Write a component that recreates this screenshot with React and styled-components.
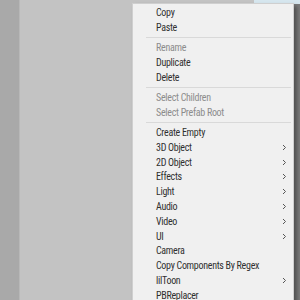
import React from 'react';
import styled, { createGlobalStyle } from 'styled-components';

const GlobalStyle = createGlobalStyle`
  html, body {
    margin: 0;
    padding: 0;
    background: #c3c3c3;
  }
  body {
    font-family: "Roboto Condensed", "Liberation Sans Narrow", "Liberation Sans", Arial, sans-serif;
  }
`;

const Screen = styled.div`
  position: relative;
  display: flex;
  width: 300px;
  height: 300px;
  overflow: hidden;
`;

const SideStrip = styled.div`
  width: 19px;
  background: #a9a9a9;
  border-right: 1px solid #b8b8b8;
`;

const Hierarchy = styled.div`
  flex: 1;
  background: #c3c3c3;
`;

const SceneView = styled.div`
  width: 46px;
  display: flex;
  flex-direction: column;
  background: #7b7b7b;
`;

const SkyBand = styled.div`
  height: 4px;
  background: #d6e6ee;
`;

const Menu = styled.div`
  position: absolute;
  left: 132px;
  top: 3px;
  width: 160px;
  padding: 1px 0 4px;
  background: #f0f0f0;
  border: 1px solid #cfcfcf;
  box-shadow: 3px 3px 4px rgba(0, 0, 0, 0.35);
  font-size: 10px;
  letter-spacing: -0.3px;
`;

const Item = styled.div`
  display: flex;
  align-items: center;
  height: 14.8px;
  padding: 0 6px 0 23px;
  color: ${(p) => (p.$disabled ? '#8c8c8c' : '#303030')};
  white-space: nowrap;
`;

const Label = styled.span`
  flex: 1;
`;

const Separator = styled.div`
  height: 5.5px;
  display: flex;
  align-items: center;
  padding: 0 2px 0 13px;

  &::after {
    content: '';
    flex: 1;
    height: 1px;
    background: #d9d9d9;
  }
`;

const Chevron = () => (
  <svg width="5" height="7" viewBox="0 0 5 7">
    <polyline points="1,1 3.5,3.5 1,6" fill="none" stroke="#555555" strokeWidth="1" />
  </svg>
);

const groups = [
  [{ label: 'Copy' }, { label: 'Paste' }],
  [{ label: 'Rename', disabled: true }, { label: 'Duplicate' }, { label: 'Delete' }],
  [
    { label: 'Select Children', disabled: true },
    { label: 'Select Prefab Root', disabled: true },
  ],
  [
    { label: 'Create Empty' },
    { label: '3D Object', sub: true },
    { label: '2D Object', sub: true },
    { label: 'Effects', sub: true },
    { label: 'Light', sub: true },
    { label: 'Audio', sub: true },
    { label: 'Video', sub: true },
    { label: 'UI', sub: true },
    { label: 'Camera' },
    { label: 'Copy Components By Regex' },
    { label: 'lilToon', sub: true },
    { label: 'PBReplacer' },
  ],
];

const App = () => {
  return (
    <Screen>
      <GlobalStyle />
      <SideStrip />
      <Hierarchy />
      <SceneView>
        <SkyBand />
      </SceneView>
      <Menu>
        {groups.map((group, gi) => (
          <React.Fragment key={gi}>
            {gi > 0 && <Separator />}
            {group.map((item) => (
              <Item key={item.label} $disabled={item.disabled}>
                <Label>{item.label}</Label>
                {item.sub && <Chevron />}
              </Item>
            ))}
          </React.Fragment>
        ))}
      </Menu>
    </Screen>
  );
};

export default App;
